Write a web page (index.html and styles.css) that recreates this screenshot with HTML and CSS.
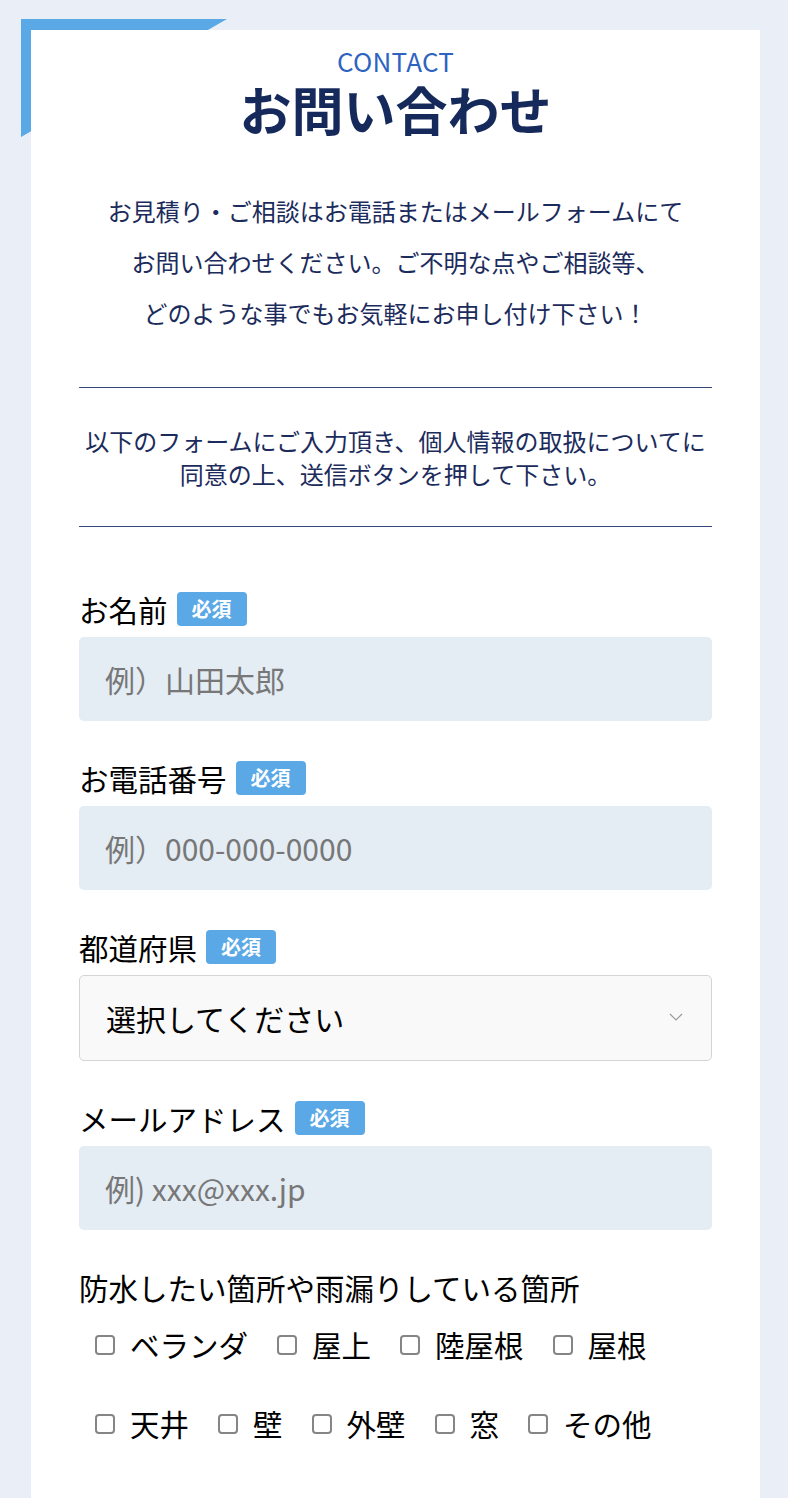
FILE: index.html
```html
<!DOCTYPE html>
<html lang="ja">
<head>
    <meta charset="UTF-8">
    <meta name="viewport" content="width=device-width, initial-scale=1.0">
    <title>お問い合わせ</title>
    <link rel="stylesheet" href="styles.css">
</head>
<body>
    <section class="contact">
        <div class="contact-header">
            <p class="contact-en">CONTACT</p>
            <h1>お問い合わせ</h1>
        </div>

        <p class="contact-lead">
            お見積り・ご相談はお電話またはメールフォームにて<br>
            お問い合わせください。ご不明な点やご相談等、<br>
            どのような事でもお気軽にお申し付け下さい！
        </p>

        <p class="contact-note">以下のフォームにご入力頂き、個人情報の取扱についてに同意の上、送信ボタンを押して下さい。</p>

        <form class="contact-form">
            <div class="form-group">
                <label for="name">お名前<span class="required">必須</span></label>
                <input type="text" id="name" placeholder="例）山田太郎">
            </div>

            <div class="form-group">
                <label for="tel">お電話番号<span class="required">必須</span></label>
                <input type="tel" id="tel" placeholder="例）000-000-0000">
            </div>

            <div class="form-group">
                <label for="pref">都道府県<span class="required">必須</span></label>
                <div class="select-wrap">
                    <select id="pref">
                        <option>選択してください</option>
                        <option>北海道</option>
                        <option>東京都</option>
                        <option>大阪府</option>
                    </select>
                    <svg class="select-arrow" width="14" height="8" viewBox="0 0 14 8">
                        <path d="M1 1 L7 7 L13 1" fill="none" stroke="#9a9a9a" stroke-width="1.2"/>
                    </svg>
                </div>
            </div>

            <div class="form-group">
                <label for="mail">メールアドレス<span class="required">必須</span></label>
                <input type="email" id="mail" placeholder="例) xxx@xxx.jp">
            </div>

            <div class="form-group">
                <label>防水したい箇所や雨漏りしている箇所</label>
                <div class="check-list">
                    <label class="check"><input type="checkbox">ベランダ</label>
                    <label class="check"><input type="checkbox">屋上</label>
                    <label class="check"><input type="checkbox">陸屋根</label>
                    <label class="check"><input type="checkbox">屋根</label>
                    <label class="check"><input type="checkbox">天井</label>
                    <label class="check"><input type="checkbox">壁</label>
                    <label class="check"><input type="checkbox">外壁</label>
                    <label class="check"><input type="checkbox">窓</label>
                    <label class="check"><input type="checkbox">その他</label>
                </div>
            </div>
        </form>
    </section>
</body>
</html>
```

FILE: styles.css
```css
* {
    margin: 0;
    padding: 0;
    box-sizing: border-box;
}

:root {
    --navy: #15295a;
    --text-navy: #1b2b5c;
    --blue: #2e63c0;
    --light-blue: #5aa8e6;
    --field-bg: #e4ecf4;
    --background: #eaeef6;
}

body {
    font-family: "Noto Sans CJK JP", "Noto Sans", sans-serif;
    background: var(--background);
    color: #000;
}

.contact {
    position: relative;
    background: #fff;
    margin: 30px 28px 0 31px;
    padding: 16px 48px 120px;
}

/* blue corner triangle behind the card */
.contact::before {
    content: "";
    position: absolute;
    top: -11px;
    left: -10px;
    width: 206px;
    height: 118px;
    background: var(--light-blue);
    clip-path: polygon(0 0, 100% 0, 0 100%);
    z-index: -1;
}

.contact-header {
    text-align: center;
}

.contact-en {
    font-size: 26px;
    line-height: 30px;
    color: var(--blue);
    letter-spacing: 0.01em;
}

.contact-header h1 {
    margin-top: 2px;
    font-size: 52px;
    line-height: 62px;
    font-weight: 700;
    color: var(--navy);
}

.contact-lead {
    margin-top: 45px;
    font-size: 24px;
    line-height: 51px;
    text-align: center;
    color: var(--text-navy);
    padding-bottom: 49px;
    border-bottom: 1px solid #34467a;
}

.contact-note {
    font-size: 24px;
    line-height: 33px;
    text-align: center;
    color: var(--text-navy);
    padding: 36px 0 36px;
    border-bottom: 1px solid #34467a;
}

.contact-form {
    padding-top: 65px;
}

.form-group {
    margin-bottom: 40px;
}

.form-group > label {
    display: flex;
    align-items: center;
    height: 34px;
    font-size: 29.5px;
    margin-bottom: 11px;
    color: #000;
}

.required {
    display: inline-block;
    margin-left: 9px;
    padding: 0 15px;
    height: 34px;
    line-height: 34px;
    font-size: 20px;
    font-weight: 700;
    color: #fff;
    background: var(--light-blue);
    border-radius: 4px;
}

.form-group input[type="text"],
.form-group input[type="tel"],
.form-group input[type="email"] {
    display: block;
    width: 100%;
    height: 84px;
    padding: 0 26px;
    border: none;
    border-radius: 5px;
    background: var(--field-bg);
    font-family: inherit;
    font-size: 30px;
    color: #333;
    outline: none;
}

.form-group input::placeholder {
    color: #777;
}

.select-wrap {
    position: relative;
}

.select-wrap select {
    display: block;
    width: 100%;
    height: 86px;
    padding: 0 26px;
    border: 1px solid #d4d4d4;
    border-radius: 5px;
    background: #f9f9f9;
    font-family: inherit;
    font-size: 30px;
    color: #000;
    appearance: none;
    -webkit-appearance: none;
    outline: none;
}

.select-arrow {
    position: absolute;
    right: 29px;
    top: 38px;
    pointer-events: none;
}

.check-list {
    display: flex;
    flex-wrap: wrap;
    column-gap: 29px;
    padding-left: 16px;
    margin-top: -11px;
}

.check {
    display: flex;
    align-items: center;
    height: 79px;
    font-size: 29.5px;
    color: #000;
}

.check input {
    display: block;
    flex-shrink: 0;
    appearance: none;
    -webkit-appearance: none;
    width: 20px;
    height: 20px;
    margin: 2px 15px 0 0;
    border: 2px solid #858585;
    border-radius: 4px;
    background: #fff;
}

.check input:checked {
    background: var(--light-blue);
    border-color: var(--light-blue);
}
```
